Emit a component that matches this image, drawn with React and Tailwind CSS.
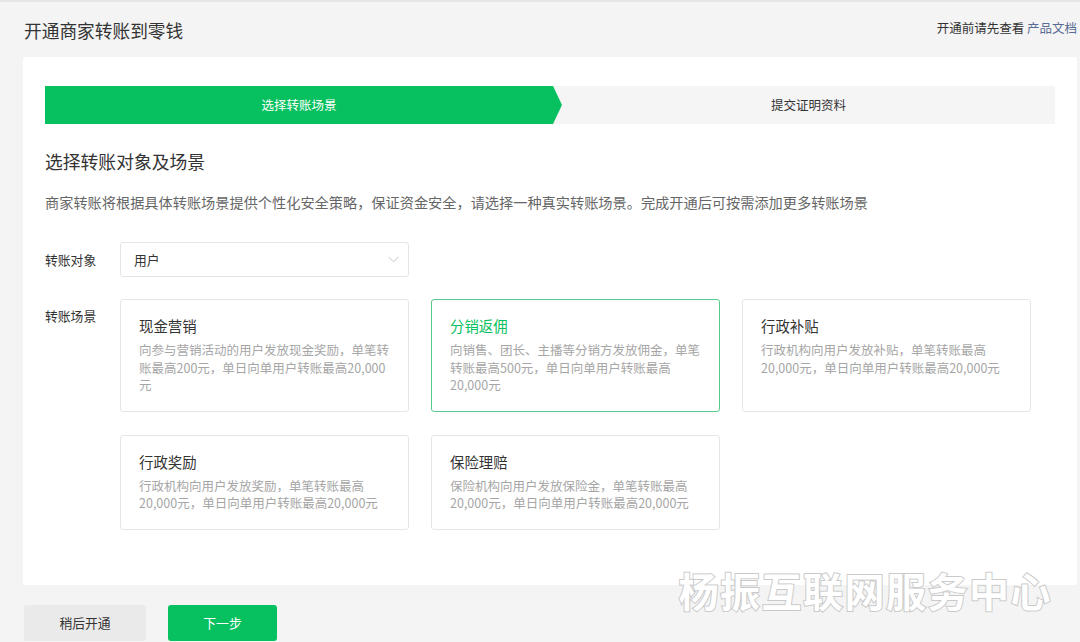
import React from 'react';

const scenes = [
    { title: "现金营销", desc: "向参与营销活动的用户发放现金奖励，单笔转账最高200元，单日向单用户转账最高20,000元" },
    { title: "分销返佣", desc: "向销售、团长、主播等分销方发放佣金，单笔转账最高500元，单日向单用户转账最高20,000元", active: true },
    { title: "行政补贴", desc: "行政机构向用户发放补贴，单笔转账最高20,000元，单日向单用户转账最高20,000元" },
    { title: "行政奖励", desc: "行政机构向用户发放奖励，单笔转账最高20,000元，单日向单用户转账最高20,000元" },
    { title: "保险理赔", desc: "保险机构向用户发放保险金，单笔转账最高20,000元，单日向单用户转账最高20,000元" },
];

export default function App() {
    return (
        <div className="relative min-h-[642px] overflow-hidden bg-[#f4f4f4] border-t-2 border-[#e6e6e6] pl-[23px] pr-[3px] font-['Microsoft_YaHei','Noto_Sans_CJK_SC',sans-serif] text-[#333]">
            {/* header */}
            <div className="flex items-center justify-between h-[55px] pl-px">
                <h1 className="text-[17.7px] leading-[26px] text-[#333]">开通商家转账到零钱</h1>
                <div className="text-[12.5px] text-[#333] -mt-[3px]">
                    开通前请先查看 <a className="text-[#576b95]">产品文档</a>
                </div>
            </div>

            {/* main card */}
            <div className="bg-white rounded-[2px] px-[22px] pt-[29px] pb-[55px]">
                <div className="flex h-[38px] bg-[#f5f5f5] text-[12.5px]">
                    <div className="w-[517px] bg-[#07c160] text-white flex items-center justify-center pr-[9px] [clip-path:polygon(0_0,calc(100%_-_9px)_0,100%_50%,calc(100%_-_9px)_100%,0_100%)]">
                        选择转账场景
                    </div>
                    <div className="flex-1 flex items-center justify-center text-[#333]">提交证明资料</div>
                </div>

                <h2 className="mt-[24px] text-[17.8px] leading-[26px] text-[#333]">选择转账对象及场景</h2>
                <p className="mt-[17px] text-[14.2px] leading-[22px] text-[#666]">
                    商家转账将根据具体转账场景提供个性化安全策略，保证资金安全，请选择一种真实转账场景。完成开通后可按需添加更多转账场景
                </p>

                <div className="mt-[29px] flex items-center">
                    <div className="w-[75px] text-[12.8px] text-[#333]">转账对象</div>
                    <div className="w-[289px] h-[35px] border border-[#e5e5e5] rounded-[3px] flex items-center justify-between pl-[13px] pr-[9px] text-[12.8px] text-[#333]">
                        <span>用户</span>
                        <svg width="11" height="7" viewBox="0 0 11 7" fill="none">
                            <path d="M0.5 0.8 L5.5 5.8 L10.5 0.8" stroke="#c4c4c4" strokeWidth="1" />
                        </svg>
                    </div>
                </div>

                <div className="mt-[22px] flex items-start">
                    <div className="w-[75px] pt-[8px] text-[12.8px] leading-[18px] text-[#333]">转账场景</div>
                    <div className="grid grid-cols-[289px_289px_289px] gap-x-[22px] gap-y-[23px]">
                        {scenes.map((s, i) => (
                            <div
                                key={i}
                                className={`rounded-[3px] border pl-[18px] pr-[18px] pt-[15px] pb-[17px] ${s.active ? 'border-[#58cc8d]' : 'border-[#e6e6e6]'}`}
                            >
                                <div className={`text-[14.4px] leading-[22px] ${s.active ? 'text-[#07c160]' : 'text-[#333]'}`}>{s.title}</div>
                                <div className="mt-[4px] text-[12.5px] leading-[17.5px] text-[#a6a6a6]">{s.desc}</div>
                            </div>
                        ))}
                    </div>
                </div>
            </div>

            {/* footer buttons */}
            <div className="mt-[20px] flex gap-[22px] pl-px">
                <button className="w-[122px] h-[36px] bg-[#eaeaea] rounded-[3px] text-[12.8px] text-[#333]">稍后开通</button>
                <button className="w-[109px] h-[36px] bg-[#07c160] rounded-[3px] text-[12.8px] text-white">下一步</button>
            </div>

            {/* watermark */}
            <div className="absolute right-[28px] top-[564px] font-bold text-[40px] leading-[48px] tracking-[1.5px] text-white [-webkit-text-stroke:2px_#cacaca] [paint-order:stroke_fill] pointer-events-none select-none">
                杨振互联网服务中心
            </div>
        </div>
    );
}
